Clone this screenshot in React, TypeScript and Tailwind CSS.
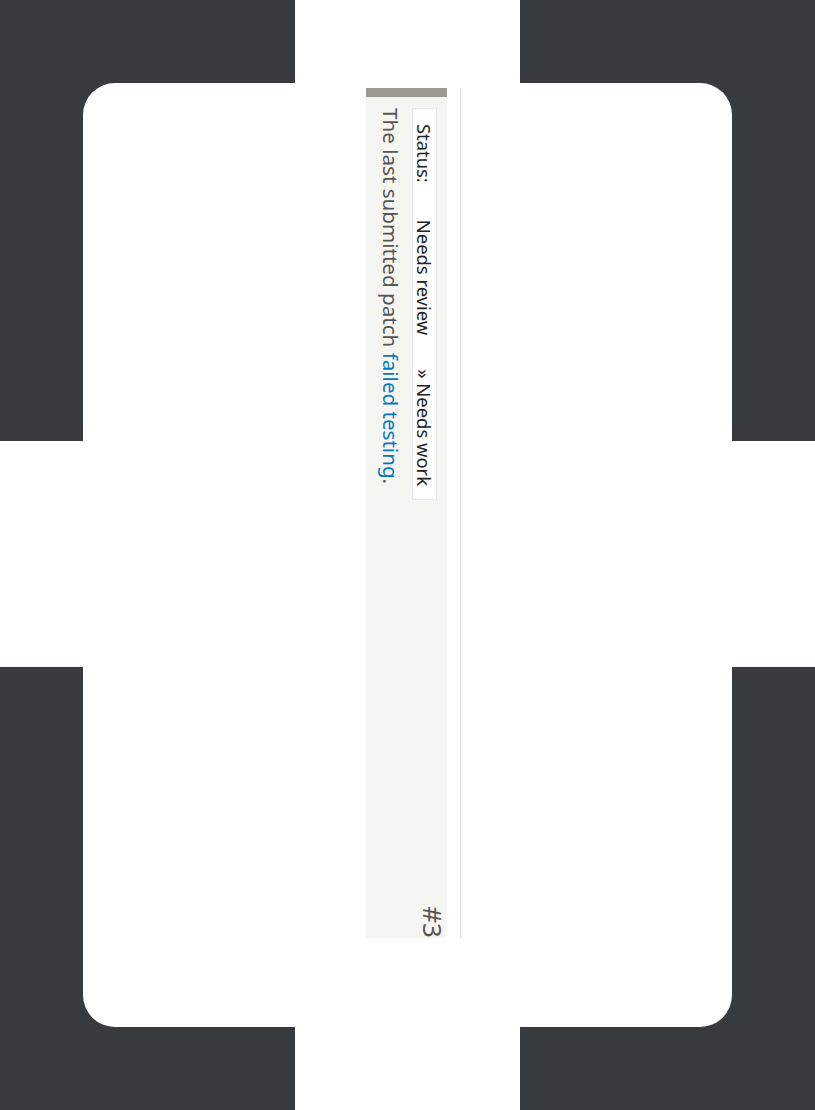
export default function App() {
  return (
    <div className="relative w-[815px] h-[1110px] overflow-hidden bg-white font-['Noto_Sans',sans-serif]">
      <div className="grid grid-cols-[295px_225px_295px] grid-rows-[441px_226px_443px]">
        <div className="bg-[#383b3d] pl-[83px] pt-[83px]">
          <div className="h-full bg-white rounded-tl-[32px]" />
        </div>
        <div className="bg-white" />
        <div className="bg-[#383b3d] pr-[83px] pt-[83px]">
          <div className="h-full bg-white rounded-tr-[32px]" />
        </div>
        <div className="bg-white" />
        <div className="bg-white" />
        <div className="bg-white" />
        <div className="bg-[#383b3d] pl-[83px] pb-[83px]">
          <div className="h-full bg-white rounded-bl-[32px]" />
        </div>
        <div className="bg-white" />
        <div className="bg-[#383b3d] pr-[83px] pb-[83px]">
          <div className="h-full bg-white rounded-br-[32px]" />
        </div>
      </div>

      {/* comment panel, turned a quarter clockwise */}
      <div className="absolute left-[461px] top-[88px] w-[850px] origin-top-left rotate-90">
        <div className="border-t border-[#dcdcdc] pt-[13px]">
          <div className="relative flex h-[81px] bg-[#f5f5f2]">
            <div className="w-[9px] bg-[#9b9a90]" />
            <div className="pl-[11px] pt-[10px]">
              <div className="flex h-[25px] w-[392px] items-center border border-[#e6e6e6] bg-white pl-[15px] text-[18.4px] leading-[23px] text-[#222]">
                <span className="mr-[37px]">Status:</span>
                <span className="mr-[34px]">Needs review</span>
                <span>» Needs work</span>
              </div>
              <p className="mt-[9px] text-[20.6px] leading-[24px] text-[#555]">
                The last submitted patch <a className="text-[#0678be]">failed testing</a>.
              </p>
            </div>
            <span className="absolute right-0 top-[1px] text-[26px] leading-[26px] text-[#555]">#3</span>
          </div>
        </div>
      </div>
    </div>
  );
}
